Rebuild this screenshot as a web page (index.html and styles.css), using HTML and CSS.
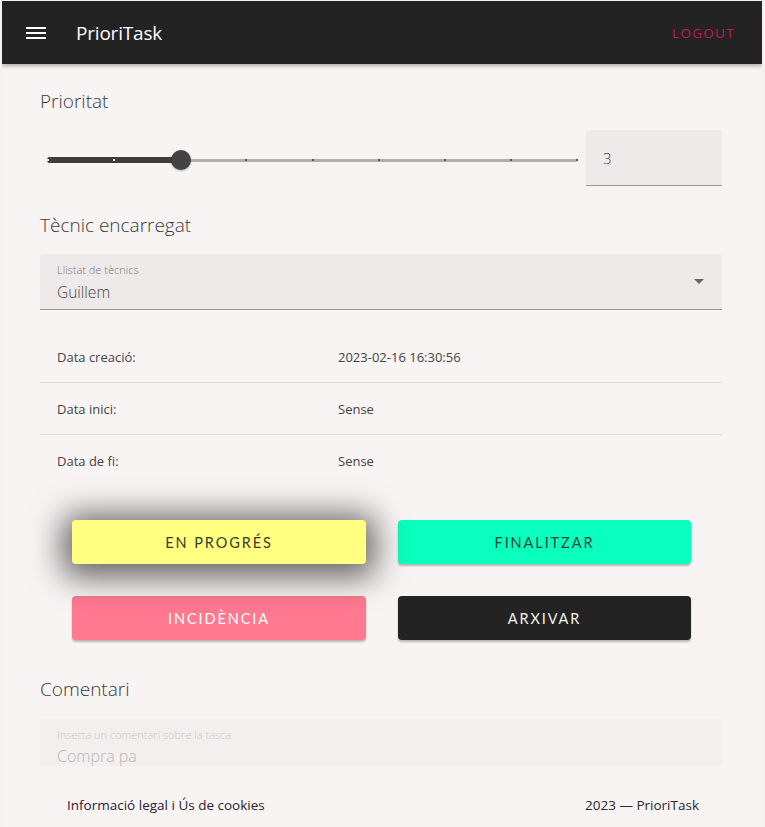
FILE: index.html
```html
<!DOCTYPE html>
<html lang="ca">
<head>
<meta charset="utf-8">
<title>PrioriTask</title>
<link rel="stylesheet" href="styles.css">
</head>
<body>
<div class="app">
  <header class="topbar">
    <button class="menu-btn" aria-label="menu">
      <svg width="20" height="14" viewBox="0 0 20 14"><rect x="0" y="0" width="20" height="2" fill="#fff"/><rect x="0" y="5" width="20" height="2" fill="#fff"/><rect x="0" y="10" width="20" height="2" fill="#fff"/></svg>
    </button>
    <div class="brand">PrioriTask</div>
    <a class="logout">LOGOUT</a>
  </header>

  <main class="content">
    <h2 class="section-title">Prioritat</h2>
    <div class="priority-row">
      <div class="slider">
        <div class="track"></div>
        <div class="track-active" style="width:25%"></div>
        <span class="tick on" style="left:0%"></span>
        <span class="tick on" style="left:12.5%"></span>
        <span class="tick" style="left:37.5%"></span>
        <span class="tick" style="left:50%"></span>
        <span class="tick" style="left:62.5%"></span>
        <span class="tick" style="left:75%"></span>
        <span class="tick" style="left:87.5%"></span>
        <span class="tick" style="left:100%"></span>
        <span class="thumb" style="left:25%"></span>
      </div>
      <div class="num-field">3</div>
    </div>

    <h2 class="section-title second">Tècnic encarregat</h2>
    <div class="select-field">
      <div class="select-label">Llistat de tècnics</div>
      <div class="select-value">Guillem</div>
      <span class="caret"></span>
    </div>

    <div class="dates">
      <div class="date-row"><span>Data creació:</span><span>2023-02-16 16:30:56</span></div>
      <div class="date-row"><span>Data inici:</span><span>Sense</span></div>
      <div class="date-row"><span>Data de fi:</span><span>Sense</span></div>
    </div>

    <div class="actions">
      <button class="btn btn-yellow raised">EN PROGRÉS</button>
      <button class="btn btn-teal">FINALITZAR</button>
      <button class="btn btn-pink">INCIDÈNCIA</button>
      <button class="btn btn-dark">ARXIVAR</button>
    </div>

    <h2 class="section-title third">Comentari</h2>
    <div class="comment-field">
      <div class="comment-label">Inserta un comentari sobre la tasca</div>
      <div class="comment-value">Compra pa</div>
    </div>
  </main>

  <footer class="footer">
    <a class="legal">Informació legal i Ús de cookies</a>
    <span class="copy">2023 — PrioriTask</span>
  </footer>
</div>
</body>
</html>
```

FILE: styles.css
```css
* { box-sizing: border-box; }
html, body { margin: 0; padding: 0; background: #f3f1f1; }
body {
  padding: 1px 3px 0 2px;
  font-family: "Open Sans", "DejaVu Sans", sans-serif;
  font-weight: 300;
  color: #444;
}
.app {
  background: #f7f4f3;
  height: 826px;
  display: flex;
  flex-direction: column;
  overflow: hidden;
}
.topbar {
  height: 63px;
  flex: none;
  background: #232323;
  display: flex;
  align-items: center;
  padding: 0 27px 0 24px;
  box-shadow: 0 2px 4px rgba(0,0,0,0.3);
  position: relative;
  z-index: 2;
}
.menu-btn {
  background: none; border: 0; padding: 0; margin: 0;
  width: 20px; height: 14px; display: flex;
  margin-top: 2px;
}
.brand {
  color: #fff;
  font-size: 19px;
  font-weight: 400;
  margin-left: 30px;
  letter-spacing: -0.2px;
}
.logout {
  margin-left: auto;
  color: #c2185b;
  font-size: 13.5px;
  font-weight: 400;
  letter-spacing: 1.3px;
}
.content {
  height: 702px;
  flex: none;
  overflow: hidden;
  padding: 24px 40px 0 38px;
}
.section-title {
  margin: 0;
  font-size: 19px;
  font-weight: 300;
  color: #3a3a3a;
  line-height: 26px;
}
.section-title.second { margin-top: 26px; }
.section-title.third { margin-top: 36px; }
.priority-row {
  display: flex;
  align-items: center;
  margin-top: 16px;
}
.slider {
  position: relative;
  flex: 1;
  height: 20px;
  margin: 4px 9px 0 8px;
}
.track {
  position: absolute; left: 0; right: 0; top: 8.5px;
  height: 3px; background: #b0aeae; border-radius: 2px;
}
.track-active {
  position: absolute; left: -1px; top: 7px;
  height: 6px; background: #3d3d3d; border-radius: 3px;
}
.tick {
  position: absolute; top: 9px;
  width: 2px; height: 2px; margin-left: -1px;
  background: #555;
}
.tick.on { background: #f2f2f2; }
.thumb {
  position: absolute; top: 0;
  width: 20px; height: 20px; margin-left: -9px;
  border-radius: 50%;
  background: #434343;
  box-shadow: 0 1px 2px rgba(0,0,0,0.3);
}
.num-field {
  width: 136px;
  height: 56px;
  background: #eeeae9;
  border-bottom: 1px solid #999;
  border-radius: 4px 4px 0 0;
  padding: 18px 0 0 17px;
  font-size: 15px;
  color: #3a3a3a;
}
.select-field {
  position: relative;
  margin-top: 16px;
  height: 56px;
  background: #eeeae9;
  border-bottom: 1px solid #999;
  border-radius: 4px 4px 0 0;
  padding: 8px 17px 0;
}
.select-label {
  font-size: 11px;
  color: #777;
  line-height: 16px;
}
.select-value {
  font-size: 15.5px;
  color: #3f3f3f;
  line-height: 22px;
  margin-top: 3px;
}
.caret {
  position: absolute;
  right: 18px; top: 25px;
  width: 0; height: 0;
  border-left: 5px solid transparent;
  border-right: 5px solid transparent;
  border-top: 5px solid #666;
}
.dates { margin-top: 21px; }
.date-row {
  display: grid;
  grid-template-columns: 281px 1fr;
  height: 52px;
  align-items: center;
  padding: 0 17px;
  font-size: 13px;
  font-weight: 400;
  color: #444;
  border-bottom: 1px solid #dcdada;
}
.date-row:last-child { border-bottom: 0; }
.actions {
  display: grid;
  grid-template-columns: 294px 293px;
  column-gap: 32px;
  row-gap: 32px;
  padding: 0 32px;
  margin-top: 33px;
}
.btn {
  height: 44px;
  border: 0;
  border-radius: 4px;
  font-family: "Lato", "Open Sans", sans-serif;
  font-size: 14.5px;
  font-weight: 400;
  letter-spacing: 1.9px;
  box-shadow: 0 2px 2px rgba(0,0,0,0.25);
}
.btn-yellow { background: #ffff80; color: #3a3a30; }
.btn-yellow.raised { box-shadow: 0 4px 32px 9px rgba(0,0,0,0.6); position: relative; z-index: 1; }
.btn-teal { background: #0afebe; color: #25443a; }
.btn-pink { background: #ff7990; color: #fff; }
.btn-dark { background: #232323; color: #f2f2f2; }
.comment-field {
  margin-top: 17px;
  height: 60px;
  background: #f3efee;
  padding: 9px 17px 0;
}
.comment-label {
  font-size: 11px;
  color: #c9c6c5;
  line-height: 14px;
}
.comment-value {
  font-size: 16px;
  color: #b9b6b5;
  margin-top: 3px;
}
.footer {
  flex: 1;
  display: flex;
  justify-content: space-between;
  align-items: flex-start;
  padding: 30px 63px 0 65px;
  font-size: 13.5px;
  font-weight: 400;
  color: #2a2a2a;
}
.legal { color: #2a2230; }
```
